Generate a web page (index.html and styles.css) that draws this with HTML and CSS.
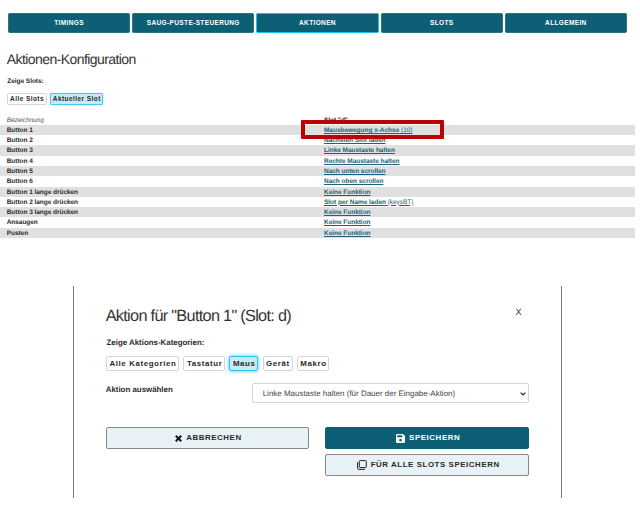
FILE: index.html
```html
<!DOCTYPE html>
<html lang="de">
<head>
<meta charset="utf-8">
<title>Aktionen-Konfiguration</title>
<link rel="stylesheet" href="styles.css">
</head>
<body>
<nav class="tabs">
  <button class="tab">TIMINGS</button>
  <button class="tab">SAUG-PUSTE-STEUERUNG</button>
  <button class="tab tab-active">AKTIONEN</button>
  <button class="tab">SLOTS</button>
  <button class="tab">ALLGEMEIN</button>
</nav>
<main class="page">
  <h1>Aktionen-Konfiguration</h1>
  <p class="label">Zeige Slots:</p>
  <div class="chips">
    <button class="chip">Alle Slots</button>
    <button class="chip chip-active">Aktueller Slot</button>
  </div>
  <div class="table">
    <div class="row head"><i>Bezeichnung</i><b>Slot "d"</b></div>
    <div class="row"><b>Button 1</b><a class="marked"><b>Mausbewegung x-Achse</b> (10)</a></div>
    <div class="row"><b>Button 2</b><a><b>Nächsten Slot laden</b></a></div>
    <div class="row"><b>Button 3</b><a><b>Linke Maustaste halten</b></a></div>
    <div class="row"><b>Button 4</b><a><b>Rechte Maustaste halten</b></a></div>
    <div class="row"><b>Button 5</b><a><b>Nach unten scrollen</b></a></div>
    <div class="row"><b>Button 6</b><a><b>Nach oben scrollen</b></a></div>
    <div class="row"><b>Button 1 lange drücken</b><a><b>Keine Funktion</b></a></div>
    <div class="row"><b>Button 2 lange drücken</b><a><b>Slot per Name laden</b> (keysBT)</a></div>
    <div class="row"><b>Button 3 lange drücken</b><a><b>Keine Funktion</b></a></div>
    <div class="row"><b>Ansaugen</b><a><b>Keine Funktion</b></a></div>
    <div class="row"><b>Pusten</b><a><b>Keine Funktion</b></a></div>
  </div>
</main>
<section class="modal">
  <header class="modal-head">
    <h2>Aktion für "Button 1" (Slot: d)</h2>
    <span class="close">X</span>
  </header>
  <p class="label">Zeige Aktions-Kategorien:</p>
  <div class="chips">
    <button class="chip">Alle Kategorien</button>
    <button class="chip">Tastatur</button>
    <button class="chip chip-active">Maus</button>
    <button class="chip">Gerät</button>
    <button class="chip">Makro</button>
  </div>
  <div class="field">
    <b>Aktion auswählen</b>
    <div class="select">
      <span>Linke Maustaste halten (für Dauer der Eingabe-Aktion)</span>
      <svg width="6" height="4" viewBox="0 0 6 4"><path d="M.7.7 3 3 5.300.7" fill="none" stroke="#222" stroke-width="1.2"/></svg>
    </div>
  </div>
  <div class="actions">
    <button class="action">
      <svg class="cross" width="7" height="7" viewBox="0 0 7 7"><path d="M.8.8l5.400 5.400M6.200.8.8 6.200" stroke="#111" stroke-width="2"/></svg>
      ABBRECHEN</button>
    <div class="stack">
      <button class="action primary">
        <svg width="9" height="9" viewBox="0 0 9 9"><path fill="#fff" fill-rule="evenodd" d="M1 0h6l2 2v6q0 1-1 1H1Q0 9 0 8V1q0-1 1-1zM1.300 1.300v2h5v-2zM4.500 4.700a1.400 1.400 0 1 0 .01 0z"/></svg>
        SPEICHERN</button>
      <button class="action">
        <svg width="10" height="10" viewBox="0 0 10 10"><rect x="2.300" y=".6" width="7" height="7" rx=".8" fill="none" stroke="#222"/><path d="M.6 2.200v6.200q0 1 1 1h6.200" fill="none" stroke="#222"/></svg>
        FÜR ALLE SLOTS SPEICHERN</button>
    </div>
  </div>
</section>
</body>
</html>
```
FILE: styles.css
```css
*, *::after { box-sizing: border-box; }
body {
  margin: 0;
  height: 505px;
  overflow: hidden;
  background: #fff;
  color: #2a2a2a;
  font: 6.500px/10px "Liberation Sans", Arial, sans-serif;
  letter-spacing: -.04px;
  text-rendering: geometricPrecision;
}
button { margin: 0; padding: 0; font: inherit; font-weight: bold; color: inherit; white-space: nowrap; }
h1, h2, p { margin: 0; font-weight: normal; }
svg { flex: none; }

.tabs { display: grid; grid-template-columns: repeat(5, 1fr); gap: 2px; padding: 13px 13px 0 8px; }
.tab {
  height: 20px;
  border: 1px solid #2f7286;
  border-radius: 1.500px;
  background: #0d5f76;
  color: #fff;
  letter-spacing: .37px;
}
.tab-active { border: 1px solid #1fc0f5; }

.page { padding: 17px 5px 0 0; }
.page h1 { padding-left: 6.700px; font-size: 14px; line-height: 18px; letter-spacing: -.57px; color: #333; }
.page .label { padding: 9.300px 0 0 7.300px; }
.label { font-weight: bold; }
.chips { display: flex; }
.page .chips { gap: 3.200px; padding: 5.700px 0 0 7px; }
.chip {
  height: 12px;
  padding: 0 1.600px 0 2px;
  border: 1px solid #d5d5d5;
  border-radius: 1.500px;
  background: #fff;
  font-size: 6.500px;
  letter-spacing: .44px;
}
.chip-active { border-color: #46c8f3; background: #c8eaf5; box-shadow: 0 0 1px #46c8f3; }

.table { padding-top: 9.700px; }
.row {
  display: grid;
  grid-template-columns: 317.300px 1fr;
  height: 10.270px;
  padding-left: 6.700px;
  line-height: 11.400px;
}
.row:nth-child(even) { background: #e0e0e0; }
.head i { color: #555; letter-spacing: -.05px; }
.row a { justify-self: start; color: #1c6378; text-decoration: underline; letter-spacing: -.03px; }
.marked { position: relative; }
.marked::after {
  content: "";
  position: absolute;
  left: -22.700px;
  top: -4.500px;
  width: 142.500px;
  height: 18.500px;
  border: 4px solid #c00000;
  border-radius: 1px;
}

.modal {
  width: 489px;
  height: 212px;
  margin: 47.700px 0 0 73px;
  padding: 20px 32px 0 31.700px;
  border: solid #777;
  border-width: 0 1px;
  font-size: 7.900px;
  letter-spacing: 0;
}
.modal-head { display: flex; justify-content: space-between; }
.modal-head h2 { font-size: 16.300px; line-height: 20px; letter-spacing: -.7px; color: #333; }
.close { padding: 1px 7.500px 0 0; font-size: 9px; line-height: 11px; }
.modal .label { padding: 12px 0 0 .8px; }
.modal .chips { gap: 4.300px; padding: 8px 0 0 .3px; }
.modal .chip { height: 15px; padding: 1px 1.800px 0 2.500px; border-radius: 2px; font-size: 7.900px; letter-spacing: .6px; line-height: 11px; }
.modal .chip-active { border: 1.500px solid #30c0f0; box-shadow: 0 0 4px #46c8f3; }
.field { display: grid; grid-template-columns: 146px 277.500px; padding-top: 12px; }
.select {
  display: flex;
  align-items: center;
  justify-content: space-between;
  height: 20px;
  padding: 2px 2px 0 10px;
  border: 1px solid #d5d5d5;
  border-radius: 2px;
  font-size: 7.950px;
  letter-spacing: .01px;
  color: #444;
}
.field b { padding-top: 2px; }
.actions { display: grid; grid-template-columns: 203.500px 204px; gap: 16px; padding-top: 24px; align-items: start; }
.stack { display: grid; gap: 5px; }
.action {
  display: flex;
  align-items: center;
  justify-content: center;
  gap: 4px;
  height: 22px;
  padding: 1px 0 0 2px;
  border: 1px solid #888;
  border-radius: 2px;
  background: #e8f1f5;
  font-size: 7.900px;
  letter-spacing: .57px;
}
.cross { margin-top: 1px; }
.primary { border-color: #0d5f76; background: #0d5f76; color: #fff; }
```
